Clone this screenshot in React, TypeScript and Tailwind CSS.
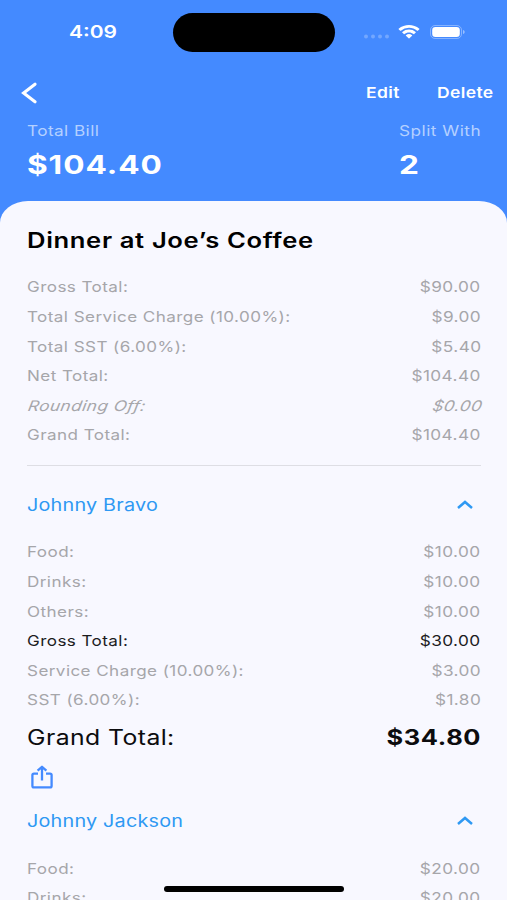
import clsx from "clsx";

interface LineItem {
  label: string;
  value: string;
  variant?: "italic" | "strong";
}

interface Person {
  name: string;
  items: LineItem[];
  total?: string;
}

const summary: LineItem[] = [
  { label: "Gross Total:", value: "$90.00" },
  { label: "Total Service Charge (10.00%):", value: "$9.00" },
  { label: "Total SST (6.00%):", value: "$5.40" },
  { label: "Net Total:", value: "$104.40" },
  { label: "Rounding Off:", value: "$0.00", variant: "italic" },
  { label: "Grand Total:", value: "$104.40" },
];

const people: Person[] = [
  {
    name: "Johnny Bravo",
    items: [
      { label: "Food:", value: "$10.00" },
      { label: "Drinks:", value: "$10.00" },
      { label: "Others:", value: "$10.00" },
      { label: "Gross Total:", value: "$30.00", variant: "strong" },
      { label: "Service Charge (10.00%):", value: "$3.00" },
      { label: "SST (6.00%):", value: "$1.80" },
    ],
    total: "$34.80",
  },
  {
    name: "Johnny Jackson",
    items: [
      { label: "Food:", value: "$20.00" },
      { label: "Drinks:", value: "$20.00" },
    ],
  },
];

const StatusBar = () => {
  return (
    <div className="relative flex h-16 items-center justify-between pr-[42px] pl-[69px]">
      <span className="origin-left scale-x-[1.2] text-[17.5px] font-semibold">4:09</span>
      <div className="absolute top-[13px] left-[173px] h-[39px] w-[162px] rounded-full bg-black" />
      <div className="flex items-center">
        <svg className="mt-[9px] mr-[8px] h-[5px] w-[26px]" viewBox="0 0 26 5" fill="#fff" fillOpacity="0.25">
          <circle cx="2" cy="2.5" r="2" />
          <circle cx="9" cy="2.5" r="2" />
          <circle cx="16" cy="2.5" r="2" />
          <circle cx="23" cy="2.5" r="2" />
        </svg>
        <svg className="mr-[10px] h-[14px] w-[22px]" viewBox="0 0 17 12" preserveAspectRatio="none" fill="#fff">
          <path d="M8.5 2.4c2.4 0 4.6.9 6.3 2.5.1.1.3.1.5 0l1.2-1.2c.1-.2.1-.4 0-.5-4.5-4.2-11.5-4.2-16 0-.1.1-.1.3 0 .5l1.2 1.2c.2.1.4.1.5 0A9.2 9.2 0 0 1 8.5 2.4Z" />
          <path d="M8.5 6.4c1.3 0 2.6.5 3.5 1.3.2.2.4.2.5 0l1.2-1.2c.2-.1.2-.4 0-.5a7.6 7.6 0 0 0-10.4 0c-.2.1-.2.4 0 .5l1.2 1.2c.1.2.3.2.5 0 .9-.8 2.2-1.3 3.5-1.3Z" />
          <path d="M10.9 9.3c.1-.1.1-.4 0-.5a3.7 3.7 0 0 0-4.8 0c-.1.1-.1.4 0 .5l2.1 2.1c.2.2.4.2.6 0Z" />
        </svg>
        <svg className="h-[14px] w-[35px]" viewBox="0 0 35 14">
          <rect x="0.5" y="0.5" width="31" height="13" rx="4.5" fill="none" stroke="#fff" strokeOpacity="0.35" />
          <rect x="2.2" y="2" width="27.6" height="10" rx="3.2" fill="#fff" />
          <path d="M33 5v4c1-.4 1.7-1.1 1.7-2S34 5.4 33 5Z" fill="#fff" fillOpacity="0.45" />
        </svg>
      </div>
    </div>
  );
};

const NavBar = () => {
  return (
    <div className="flex h-[57px] items-center pr-[13px] pl-[21px]">
      <button aria-label="Back">
        <svg className="h-[22px] w-4" viewBox="0 0 16 22" fill="none" stroke="#fff" strokeWidth="3.1" strokeLinecap="round">
          <path d="M14 2.2 2.6 11 14 19.8" />
        </svg>
      </button>
      <div className="mt-[2px] ml-auto flex text-[14.8px] font-semibold tracking-[.33px]">
        <button className="w-[71px] origin-left scale-x-[1.18] text-left">Edit</button>
        <button className="w-[57px] origin-left scale-x-[1.18] text-left">Delete</button>
      </div>
    </div>
  );
};

const Row = ({ label, value, variant }: LineItem) => {
  return (
    <div
      className={clsx(
        "flex h-[29.6px] items-center justify-between pt-[3px] text-[14.6px] tracking-[.36px]",
        variant === "strong" ? "text-[#1c1c1e]" : "text-[#a6a6aa]",
        variant === "italic" && "italic",
      )}
    >
      <span
        className={clsx(
          "origin-left",
          variant === "italic" ? "translate-x-px scale-x-[1.18] -skew-x-[9deg]" : "scale-x-[1.17]",
        )}
      >
        {label}
      </span>
      <span
        className={clsx("origin-right scale-x-[1.18]", variant === "italic" && "translate-x-px -skew-x-[9deg]")}
      >
        {value}
      </span>
    </div>
  );
};

const PersonSection = ({ name, items, total }: Person) => {
  return (
    <section>
      <div className="mb-[5.5px] flex h-[54px] items-center justify-between text-[#2f99f3]">
        <h2 className="mt-[2px] origin-left scale-x-[1.18] text-[16.8px] tracking-[.17px]">{name}</h2>
        <svg className="mr-[8px] h-[10px] w-4" viewBox="0 0 16 10" fill="none" stroke="#2f99f3" strokeWidth="2.5">
          <path d="M1 8 8 2l7 6" />
        </svg>
      </div>
      {items.map((item) => (
        <Row key={item.label} {...item} />
      ))}
      {total && (
        <>
          <div className="flex h-[45.4px] items-center justify-between pt-px text-[21px] text-[#0c0c0e]">
            <span className="origin-left scale-x-[1.18] tracking-[.35px]">Grand Total:</span>
            <span className="origin-right scale-x-[1.21] font-bold tracking-[.5px]">{total}</span>
          </div>
          <button className="flex h-[34px] items-center pl-1" aria-label="Share">
            <svg className="h-6 w-[22px]" viewBox="0 0 22 24" fill="none" stroke="#448aff" strokeWidth="2.3" strokeLinejoin="round">
              <path d="M7 8.6H3A1.6 1.4 0 0 0 1.4 10v11A1.6 1.4 0 0 0 3 22.4h16a1.6 1.4 0 0 0 1.6-1.4V10A1.6 1.4 0 0 0 19 8.6h-4M11 15.5V2M6.6 5.6 11 1.8l4.4 3.800" />
            </svg>
          </button>
        </>
      )}
    </section>
  );
};

export default function App() {
  return (
    <div className="relative flex h-[900px] w-[507px] flex-col overflow-hidden bg-[#448aff] font-['Inter',sans-serif] whitespace-nowrap text-white">
      <StatusBar />
      <NavBar />
      <div className="flex h-20 shrink-0 justify-between pr-[26px] pl-[27px]">
        <div>
          <p className="h-5 origin-left scale-x-[1.18] text-[14.6px] leading-[21px] tracking-[.34px] text-[#b4d0ff]">
            Total Bill
          </p>
          <p className="h-12 origin-left scale-x-[1.24] text-[25.5px] leading-[48px] font-bold tracking-[.74px]">$104.40</p>
        </div>
        <div className="w-[82px]">
          <p className="h-5 origin-left scale-x-[1.18] text-[14.6px] leading-[21px] tracking-[.4px] text-[#b4d0ff]">
            Split With
          </p>
          <p className="h-12 origin-left scale-x-[1.24] text-[25.5px] leading-[48px] font-bold">2</p>
        </div>
      </div>
      <main className="h-[699px] shrink-0 overflow-hidden rounded-t-[28px_22px] bg-[#f8f8ff] pt-[19px] pr-[26px] pl-[27px]">
        <h1 className="mb-3 h-10 origin-left scale-x-[1.22] text-[21px] leading-[42px] font-semibold tracking-[.52px] text-black">
          Dinner at Joe’s Coffee
        </h1>
        {summary.map((item) => (
          <Row key={item.label} {...item} />
        ))}
        <hr className="mt-[15px] mb-3 border-[#dedee4]" />
        {people.map((person) => (
          <PersonSection key={person.name} {...person} />
        ))}
      </main>
      <div className="absolute bottom-2 left-[164px] h-[6px] w-[180px] rounded-full bg-black" />
    </div>
  );
}
